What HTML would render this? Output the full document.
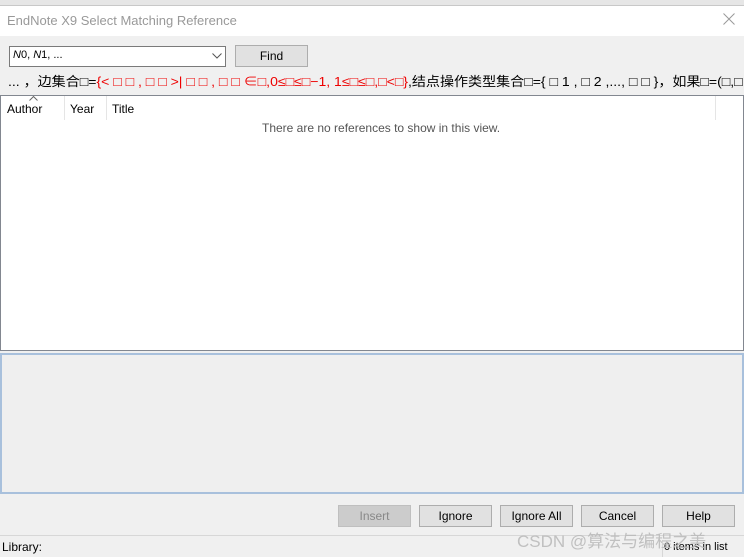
<!DOCTYPE html><html><head><style>
body{margin:0;width:744px;height:557px;background:#f0f0f0;font-family:"Liberation Sans","Noto Sans CJK SC",sans-serif;font-size:12px;position:relative;overflow:hidden;color:#000}
.a{position:absolute}
.btn{position:absolute;top:505px;width:71px;height:20px;border:1px solid #adadad;background:#e1e1e1;text-align:center;line-height:20px;font-size:12px}
</style></head><body>
<div class="a" style="left:0;top:0;width:744px;height:5px;background:#e6e6e6;border-bottom:1px solid #c8c8c8"></div>
<div class="a" style="left:0;top:6px;width:744px;height:30px;background:#fff"></div>
<div class="a" style="left:7px;top:13px;font-size:13px;color:#999">EndNote X9 Select Matching Reference</div>
<svg class="a" style="left:723px;top:13px" width="12" height="12"><path d="M0.5 0.5L11.5 11.5M11.5 0.5L0.5 11.5" stroke="#999" stroke-width="1"/></svg>
<div class="a" style="left:9px;top:46px;width:215px;height:19px;background:#fff;border:1px solid #7a7a7a"></div>
<div class="a" style="left:13px;top:49px;font-size:11px"><i>N</i>0, <i>N</i>1, ...</div>
<svg class="a" style="left:212px;top:53px" width="10" height="6"><path d="M0.5 0.5L5 5L9.5 0.5" stroke="#555" fill="none"/></svg>
<div class="a" style="left:235px;top:45px;width:71px;height:20px;border:1px solid #adadad;background:#e1e1e1;text-align:center;line-height:20px">Find</div>
<div class="a" style="left:8px;top:71px;white-space:nowrap;font-size:13px;transform:scaleX(1.08);transform-origin:left top">... ，边集合□=<span style="color:#e00">{&lt; □ □ , □ □ &gt;| □ □ , □ □ ∈□,0≤□≤□−1, 1≤□≤□,□&lt;□}</span>,结点操作类型集合□={ □ 1 , □ 2 ,..., □ □ }，如果□=(□,□</div>
<div class="a" style="left:0;top:95px;width:742px;height:254px;background:#fff;border:1px solid #828790"></div>
<div class="a" style="left:64px;top:96px;width:1px;height:24px;background:#e5e5e5"></div>
<div class="a" style="left:106px;top:96px;width:1px;height:24px;background:#e5e5e5"></div>
<div class="a" style="left:715px;top:96px;width:1px;height:24px;background:#e5e5e5"></div>
<svg class="a" style="left:29px;top:96px" width="9" height="5"><path d="M0.5 4.5L4.5 0.5L8.5 4.5" stroke="#666" fill="none"/></svg>
<div class="a" style="left:7px;top:102px">Author</div>
<div class="a" style="left:70px;top:102px">Year</div>
<div class="a" style="left:112px;top:102px">Title</div>
<div class="a" style="left:262px;top:121px;color:#555">There are no references to show in this view.</div>
<div class="a" style="left:0;top:353px;width:740px;height:137px;background:#efefef;border:2px solid #a8c0dc"></div>
<div class="btn" style="left:338px;background:#ccc;color:#888;border-color:#bfbfbf">Insert</div>
<div class="btn" style="left:419px">Ignore</div>
<div class="btn" style="left:500px">Ignore All</div>
<div class="btn" style="left:581px">Cancel</div>
<div class="btn" style="left:662px">Help</div>
<div class="a" style="left:0;top:535px;width:744px;height:1px;background:#d7d7d7"></div>
<div class="a" style="left:2px;top:540px">Library:</div>
<div class="a" style="left:662px;top:540px;width:1px;height:17px;background:#d7d7d7"></div>
<div class="a" style="left:664px;top:541px;font-size:11px">0 items in list</div>
<div class="a" style="left:517px;top:527px;font-size:17px;color:#bbb;opacity:.9">CSDN @算法与编程之美</div>
</body></html>
